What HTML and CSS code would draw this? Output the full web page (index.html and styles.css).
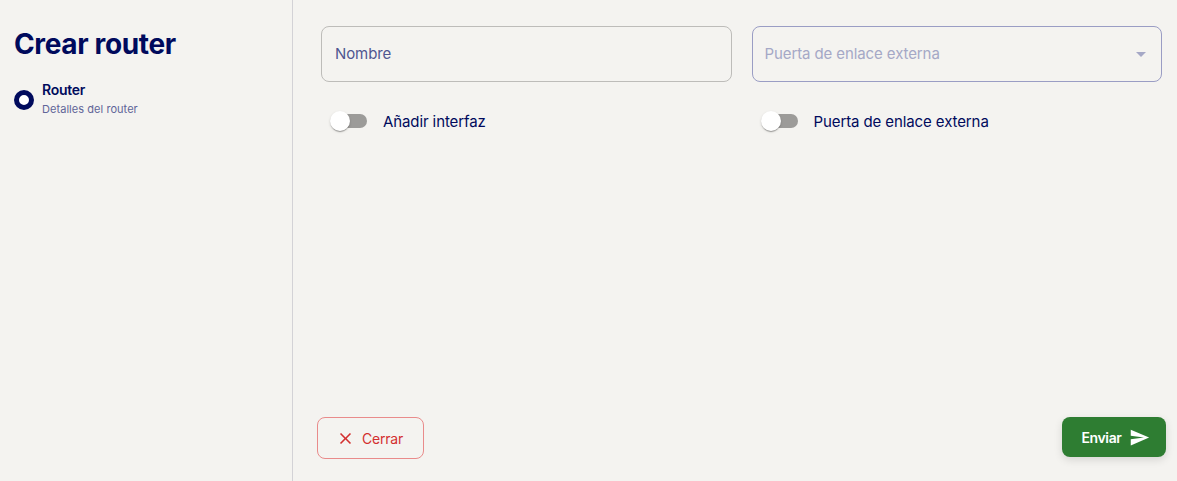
FILE: index.html
```html
<!DOCTYPE html>
<html lang="es">
<head>
    <meta charset="UTF-8">
    <meta name="viewport" content="width=device-width, initial-scale=1.0">
    <title>Crear router</title>
    <link rel="stylesheet" href="styles.css">
</head>
<body>
    <div class="layout">
        <aside class="sidebar">
            <h1>Crear router</h1>
            <div class="step">
                <span class="step-dot"></span>
                <div>
                    <div class="step-title">Router</div>
                    <div class="step-desc">Detalles del router</div>
                </div>
            </div>
        </aside>

        <main class="main">
            <form class="form-grid">
                <input class="field" type="text" placeholder="Nombre">
                <div class="field select">
                    <span>Puerta de enlace externa</span>
                    <span class="caret"></span>
                </div>

                <label class="toggle">
                    <span class="switch"><span class="track"></span><span class="thumb"></span></span>
                    <span>Añadir interfaz</span>
                </label>
                <label class="toggle">
                    <span class="switch"><span class="track"></span><span class="thumb"></span></span>
                    <span>Puerta de enlace externa</span>
                </label>
            </form>

            <div class="actions">
                <button type="button" class="btn-close">
                    <svg width="19" height="19" viewBox="0 0 24 24" fill="currentColor"><path d="M19 6.41 17.59 5 12 10.59 6.41 5 5 6.41 10.59 12 5 17.59 6.41 19 12 13.41 17.59 19 19 17.59 13.41 12z"/></svg>
                    Cerrar
                </button>
                <button type="button" class="btn-send">
                    Enviar
                    <svg width="21" height="21" viewBox="0 0 24 24" fill="currentColor"><path d="M2.01 21 23 12 2.01 3 2 10l15 2-15 2z"/></svg>
                </button>
            </div>
        </main>
    </div>
</body>
</html>
```

FILE: styles.css
```css
* {
    margin: 0;
    padding: 0;
    box-sizing: border-box;
}

body {
    font-family: Inter, "Noto Sans", sans-serif;
    background-color: #f4f3f0;
    color: #000a5c;
    overflow: hidden;
}

.layout {
    display: flex;
    height: 100vh;
}

.sidebar {
    width: 293px;
    flex-shrink: 0;
    padding: 26px 14px 0;
    border-right: 1px solid #d3d2d6;
}

.sidebar h1 {
    font-size: 28px;
    line-height: 36px;
    font-weight: 700;
    letter-spacing: -0.35px;
    color: #000a5c;
}

.step {
    display: flex;
    align-items: center;
    gap: 8px;
    margin-top: 18px;
}

.step-dot {
    width: 20px;
    height: 20px;
    border: 5px solid #000a5c;
    border-radius: 50%;
    background-color: #fff;
}

.step-title {
    font-size: 14px;
    line-height: 20px;
    font-weight: 600;
    letter-spacing: -0.3px;
}

.step-desc {
    font-size: 11px;
    line-height: 19px;
    letter-spacing: 0.05px;
    color: #5f6598;
}

.main {
    flex: 1;
    display: flex;
    flex-direction: column;
    justify-content: space-between;
    padding: 26px 11px 22px 24px;
}

.form-grid {
    display: grid;
    grid-template-columns: 1fr 1fr;
    column-gap: 20px;
    row-gap: 20px;
    padding: 0 4px 0 4px;
}

.field {
    height: 56px;
    width: 100%;
    padding: 0 13px 2px;
    border: 1px solid #bdbcb9;
    border-radius: 8px;
    background: transparent;
    font-family: inherit;
    font-size: 15px;
    letter-spacing: -0.1px;
    color: #4f5690;
    outline: none;
}

.field::placeholder {
    color: #4f5690;
    opacity: 1;
}

.select {
    display: flex;
    align-items: center;
    justify-content: space-between;
    padding-left: 12px;
    border-color: #9a9dc4;
    color: #a5a8c6;
}

.caret {
    width: 0;
    height: 0;
    margin-top: 3px;
    margin-right: 2px;
    border-left: 5px solid transparent;
    border-right: 5px solid transparent;
    border-top: 5px solid #a5a8c6;
}

.toggle {
    display: flex;
    align-items: center;
    gap: 4px;
    font-size: 15px;
    letter-spacing: -0.1px;
    color: #000a5c;
}

.switch {
    position: relative;
    display: block;
    width: 58px;
    height: 38px;
    flex-shrink: 0;
}

.track {
    position: absolute;
    left: 12px;
    top: 12px;
    width: 34px;
    height: 14px;
    border-radius: 7px;
    background-color: #9c9b99;
}

.thumb {
    position: absolute;
    left: 9px;
    top: 9px;
    width: 20px;
    height: 20px;
    border-radius: 50%;
    background-color: #fff;
    box-shadow: 0 2px 1px -1px rgba(0, 0, 0, 0.2), 0 1px 1px rgba(0, 0, 0, 0.14), 0 1px 3px rgba(0, 0, 0, 0.12);
}

.actions {
    display: flex;
    justify-content: space-between;
    align-items: flex-start;
}

.actions button {
    display: flex;
    align-items: center;
    font-family: inherit;
    font-size: 14px;
    border-radius: 8px;
    cursor: pointer;
}

.btn-close {
    width: 107px;
    height: 42px;
    justify-content: center;
    gap: 7px;
    padding-right: 2px;
    border: 1px solid #e98b8b;
    background: transparent;
    color: #d32f2f;
    font-weight: 400;
    letter-spacing: -0.2px;
}

.btn-send {
    width: 104px;
    height: 40px;
    justify-content: center;
    gap: 8px;
    padding-left: 4px;
    border: none;
    background-color: #2e7d32;
    color: #fff;
    font-weight: 600;
    letter-spacing: -0.4px;
    box-shadow: 0 3px 8px rgba(0, 0, 0, 0.12);
}
```
